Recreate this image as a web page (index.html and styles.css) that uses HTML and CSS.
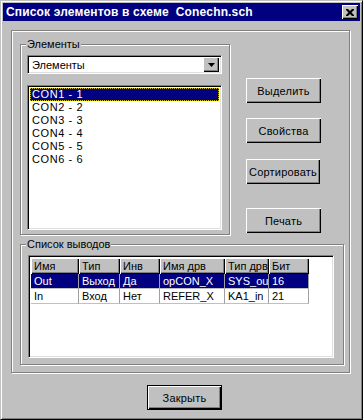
FILE: index.html
```html
<!DOCTYPE html>
<html>
<head>
<meta charset="utf-8">
<link rel="stylesheet" href="styles.css">
</head>
<body>
<div class="window">
  <div class="titlebar">
    <span class="title">Список элементов в схеме&nbsp; Conechn.sch</span>
    <span class="close-btn"><svg width="8" height="7" viewBox="0 0 8 7"><path d="M0 0h2l2 2 2-2h2v1l-2.5 2.5L8 6v1H6L4 5 2 7H0V6l2.5-2.5L0 1z" fill="#000"/></svg></span>
  </div>
  <div class="panel etched">
    <div class="top-row">
      <div class="group etched g1">
        <span class="legend">Элементы</span>
        <div class="combo sunken">
          <span class="combo-text">Элементы</span>
          <span class="combo-btn raised"><svg width="7" height="4" viewBox="0 0 7 4"><path d="M0 0h7L3.5 4z" fill="#000"/></svg></span>
        </div>
        <div class="listbox sunken">
          <div class="li sel">CON1 - 1</div>
          <div class="li">CON2 - 2</div>
          <div class="li">CON3 - 3</div>
          <div class="li">CON4 - 4</div>
          <div class="li">CON5 - 5</div>
          <div class="li">CON6 - 6</div>
        </div>
      </div>
      <div class="btn-col">
        <div class="btn raised b1">Выделить</div>
        <div class="btn raised b2">Свойства</div>
        <div class="btn raised b3">Сортировать</div>
        <div class="btn raised b4">Печать</div>
      </div>
    </div>
    <div class="group etched g2">
      <span class="legend">Список выводов</span>
      <div class="listview sunken">
        <div class="lv-head">
          <span class="hc raised c1">Имя</span><span class="hc raised c2">Тип</span><span class="hc raised c3">Инв</span><span class="hc raised c4">Имя дрв</span><span class="hc raised c5">Тип дрв</span><span class="hc raised c6">Бит</span>
        </div>
        <div class="lv-row sel">
          <span class="cell c1">Out</span><span class="cell c2">Выход</span><span class="cell c3">Да</span><span class="cell c4">opCON_X</span><span class="cell c5">SYS_out</span><span class="cell c6">16</span>
        </div>
        <div class="lv-row">
          <span class="cell c1">In</span><span class="cell c2">Вход</span><span class="cell c3">Нет</span><span class="cell c4">REFER_X</span><span class="cell c5">KA1_in</span><span class="cell c6">21</span>
        </div>
      </div>
    </div>
  </div>
  <div class="footer">
    <div class="btn raised default">Закрыть</div>
  </div>
</div>
</body>
</html>
```
FILE: styles.css
```css
html, body {
  margin: 0;
  padding: 0;
  background: #c0c0c0;
}
body {
  font-family: "Liberation Sans", Arial, sans-serif;
  font-size: 11px;
  color: #000;
}
.window {
  width: 363px;
  height: 420px;
  box-sizing: border-box;
  border: 1px solid;
  border-color: #c0c0c0 #000 #000 #c0c0c0;
  box-shadow: inset 1px 1px 0 #fff, inset -1px -1px 0 #808080;
  padding: 2px;
  background: #c0c0c0;
}
.titlebar {
  height: 18px;
  background: #000080;
  display: flex;
  align-items: center;
  justify-content: space-between;
  padding: 0 2px 0 3px;
}
.title {
  color: #fff;
  font-weight: bold;
  font-size: 12px;
  letter-spacing: 0.15px;
  white-space: nowrap;
}
.close-btn {
  width: 16px;
  height: 14px;
  box-sizing: border-box;
  background: #c0c0c0;
  display: flex;
  align-items: center;
  justify-content: center;
  box-shadow: inset 1px 1px 0 #fff, inset -1px -1px 0 #000, inset -2px -2px 0 #808080;
}
.etched {
  border: 1px solid #808080;
  box-shadow: inset 1px 1px 0 #fff, 1px 1px 0 #fff;
}
.sunken {
  border: 1px solid;
  border-color: #808080 #fff #fff #808080;
  box-shadow: inset 1px 1px 0 #000, inset -1px -1px 0 #dfdfdf;
  box-sizing: border-box;
}
.raised {
  box-sizing: border-box;
  background: #c0c0c0;
  box-shadow: inset 1px 1px 0 #fff, inset -1px -1px 0 #000, inset -2px -2px 0 #808080;
}
.panel {
  width: 339px;
  height: 343px;
  box-sizing: border-box;
  margin: 9px 0 0 8px;
  padding: 13px 0 0 8px;
}
.top-row {
  display: flex;
}
.group {
  position: relative;
  box-sizing: border-box;
}
.legend {
  position: absolute;
  top: -7px;
  left: 5px;
  padding: 0 1px;
  background: #c0c0c0;
  line-height: 13px;
}
.g1 {
  width: 210px;
  height: 191px;
  padding: 10px 0 0 6px;
}
.combo {
  width: 195px;
  height: 19px;
  background: #fff;
  display: flex;
  align-items: center;
  justify-content: space-between;
  padding: 2px;
}
.combo-text {
  padding-left: 2px;
}
.combo-btn {
  width: 16px;
  height: 15px;
  display: flex;
  align-items: center;
  justify-content: center;
}
.listbox {
  margin-top: 11px;
  width: 195px;
  height: 145px;
  background: #fff;
  padding: 2px;
}
.li {
  height: 13px;
  line-height: 13px;
  padding-left: 2px;
  letter-spacing: 0.6px;
  box-sizing: border-box;
}
.li.sel {
  background: #000080;
  color: #fff;
  outline: 1px dotted #d0c000;
  outline-offset: -1px;
}
.btn-col {
  display: flex;
  flex-direction: column;
  margin: 34px 0 0 16px;
}
.btn {
  width: 75px;
  height: 25px;
  display: flex;
  align-items: center;
  justify-content: center;
  letter-spacing: 0.2px;
}
.b2 { margin-top: 15px; }
.b3 { margin-top: 16px; width: 74px; }
.b4 { margin-top: 24px; }
.g2 {
  margin-top: 9px;
  width: 324px;
  height: 121px;
  padding: 10px 0 0 7px;
}
.listview {
  width: 306px;
  height: 103px;
  background: #fff;
  padding: 2px;
}
.lv-head, .lv-row {
  display: flex;
}
.hc {
  height: 16px;
  line-height: 16px;
  padding-left: 3px;
  white-space: nowrap;
  overflow: hidden;
}
.lv-row .cell {
  height: 15px;
  line-height: 15px;
  padding-left: 3px;
  white-space: nowrap;
  overflow: hidden;
  box-sizing: border-box;
  border-right: 1px solid #a0a0a0;
  border-bottom: 1px solid #c0c0c0;
}
.lv-row.sel .cell {
  background: #000080;
  color: #fff;
}
.c1 { width: 48px; }
.c2 { width: 41px; }
.c3 { width: 40px; }
.c4 { width: 65px; }
.c5 { width: 44px; }
.c6 { width: 40px; }
.footer {
  margin: 12px 0 0 144px;
}
.default {
  border: 1px solid #000;
}
```
